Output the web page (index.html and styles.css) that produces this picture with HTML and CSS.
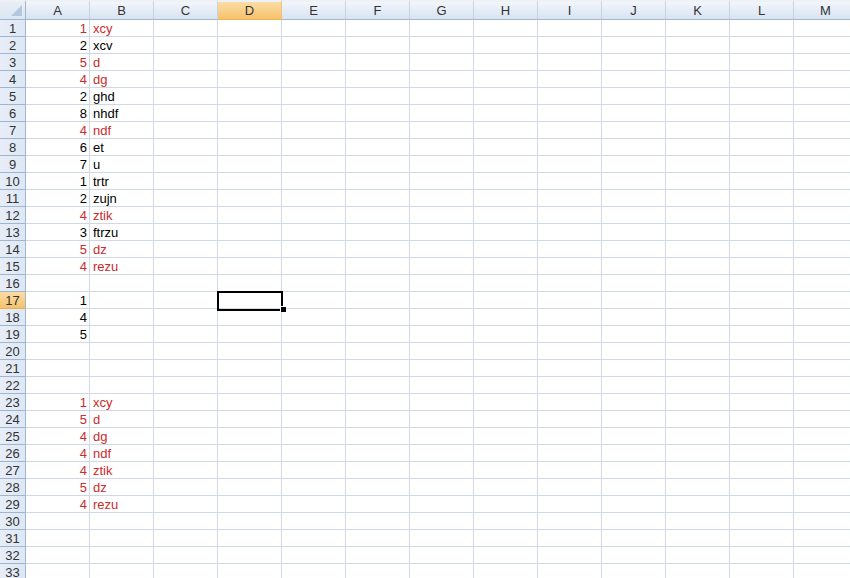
FILE: index.html
```html
<!DOCTYPE html>
<html lang="en">
<head>
    <meta charset="UTF-8">
    <title>Book1</title>
    <link rel="stylesheet" href="styles.css">
</head>
<body>
    <div class="sheet">
        <!-- column headers -->
        <div class="head-row">
            <div class="corner"></div>
            <div class="col-head">A</div>
            <div class="col-head">B</div>
            <div class="col-head">C</div>
            <div class="col-head active">D</div>
            <div class="col-head">E</div>
            <div class="col-head">F</div>
            <div class="col-head">G</div>
            <div class="col-head">H</div>
            <div class="col-head">I</div>
            <div class="col-head">J</div>
            <div class="col-head">K</div>
            <div class="col-head">L</div>
            <div class="col-head">M</div>
        </div>

        <div class="row"><div class="row-head">1</div><div class="cell num red">1</div><div class="cell red">xcy</div></div>
        <div class="row"><div class="row-head">2</div><div class="cell num">2</div><div class="cell">xcv</div></div>
        <div class="row"><div class="row-head">3</div><div class="cell num red">5</div><div class="cell red">d</div></div>
        <div class="row"><div class="row-head">4</div><div class="cell num red">4</div><div class="cell red">dg</div></div>
        <div class="row"><div class="row-head">5</div><div class="cell num">2</div><div class="cell">ghd</div></div>
        <div class="row"><div class="row-head">6</div><div class="cell num">8</div><div class="cell">nhdf</div></div>
        <div class="row"><div class="row-head">7</div><div class="cell num red">4</div><div class="cell red">ndf</div></div>
        <div class="row"><div class="row-head">8</div><div class="cell num">6</div><div class="cell">et</div></div>
        <div class="row"><div class="row-head">9</div><div class="cell num">7</div><div class="cell">u</div></div>
        <div class="row"><div class="row-head">10</div><div class="cell num">1</div><div class="cell">trtr</div></div>
        <div class="row"><div class="row-head">11</div><div class="cell num">2</div><div class="cell">zujn</div></div>
        <div class="row"><div class="row-head">12</div><div class="cell num red">4</div><div class="cell red">ztik</div></div>
        <div class="row"><div class="row-head">13</div><div class="cell num">3</div><div class="cell">ftrzu</div></div>
        <div class="row"><div class="row-head">14</div><div class="cell num red">5</div><div class="cell red">dz</div></div>
        <div class="row"><div class="row-head">15</div><div class="cell num red">4</div><div class="cell red">rezu</div></div>
        <div class="row"><div class="row-head">16</div></div>
        <div class="row"><div class="row-head active">17</div><div class="cell num">1</div><div class="cell"></div><div class="cell"></div><div class="cell selected"></div></div>
        <div class="row"><div class="row-head">18</div><div class="cell num">4</div></div>
        <div class="row"><div class="row-head">19</div><div class="cell num">5</div></div>
        <div class="row"><div class="row-head">20</div></div>
        <div class="row"><div class="row-head">21</div></div>
        <div class="row"><div class="row-head">22</div></div>
        <div class="row"><div class="row-head">23</div><div class="cell num red">1</div><div class="cell red">xcy</div></div>
        <div class="row"><div class="row-head">24</div><div class="cell num red">5</div><div class="cell red">d</div></div>
        <div class="row"><div class="row-head">25</div><div class="cell num red">4</div><div class="cell red">dg</div></div>
        <div class="row"><div class="row-head">26</div><div class="cell num red">4</div><div class="cell red">ndf</div></div>
        <div class="row"><div class="row-head">27</div><div class="cell num red">4</div><div class="cell red">ztik</div></div>
        <div class="row"><div class="row-head">28</div><div class="cell num red">5</div><div class="cell red">dz</div></div>
        <div class="row"><div class="row-head">29</div><div class="cell num red">4</div><div class="cell red">rezu</div></div>
        <div class="row"><div class="row-head">30</div></div>
        <div class="row"><div class="row-head">31</div></div>
        <div class="row"><div class="row-head">32</div></div>
        <div class="row"><div class="row-head">33</div></div>
    </div>
</body>
</html>
```
FILE: styles.css
```css
html, body {
    margin: 0;
    padding: 0;
    background-color: white;
    overflow: hidden;
}

.sheet {
    width: 860px;
    font-family: 'Liberation Sans', Arial, sans-serif;
    font-size: 13px;
    color: #000;
}

/* Column headers */
.head-row {
    display: flex;
    height: 20px;
}

.corner {
    position: relative;
    flex: none;
    width: 26px;
    box-sizing: border-box;
    border-right: 1px solid #9eb6ce;
    border-bottom: 1px solid #9eb6ce;
    border-top: 2px solid #eef2f7;
    background: linear-gradient(#e9eef5, #dce6f4);
}

.corner::after {
    content: '';
    position: absolute;
    right: 3px;
    bottom: 3px;
    width: 0;
    height: 0;
    border-left: 11px solid transparent;
    border-bottom: 11px solid #b5c7de;
}

.col-head {
    flex: none;
    width: 64px;
    box-sizing: border-box;
    border-right: 1px solid #c5d2e3;
    border-bottom: 1px solid #9eb6ce;
    border-top: 2px solid #eef2f7;
    background: linear-gradient(#f3f6fb 0%, #e4ecf7 50%, #d9e4f2 100%);
    text-align: center;
    line-height: 17px;
    color: #333;
}

.col-head.active {
    background: linear-gradient(#fbdca5 0%, #f9d08a 50%, #f4c26b 100%);
    border-bottom-color: #f0b352;
    border-right-color: #f0c27a;
}

/* Rows */
.row {
    display: flex;
    height: 17px;
    box-sizing: border-box;
    border-bottom: 1px solid #d0d7e5;
    background-image: linear-gradient(to right, #d0d7e5 1px, transparent 1px);
    background-size: 64px 100%;
    background-position: 25px 0;
}

.row-head {
    flex: none;
    width: 26px;
    box-sizing: border-box;
    height: 17px;
    margin-bottom: -1px;
    border-right: 1px solid #9eb6ce;
    border-bottom: 1px solid #9eb6ce;
    background: linear-gradient(to right, #e8eef8, #dde7f5);
    text-align: center;
    line-height: 17px;
    color: #333;
}

.row-head.active {
    background: linear-gradient(#fbdca5, #f4c26b);
    border-bottom-color: #e8b054;
}

.cell {
    flex: none;
    width: 64px;
    box-sizing: border-box;
    padding: 0 3px;
    line-height: 17px;
    white-space: nowrap;
    overflow: hidden;
}

.cell.num {
    text-align: right;
}

.red {
    color: #cc2b2b;
}

/* active cell */
.cell.selected {
    position: relative;
    overflow: visible;
}

.cell.selected::before {
    content: '';
    position: absolute;
    left: -1px;
    top: -1px;
    width: 66px;
    height: 20px;
    box-sizing: border-box;
    border: 2px solid #000;
}

.cell.selected::after {
    content: '';
    position: absolute;
    right: -4px;
    bottom: -4px;
    width: 5px;
    height: 5px;
    background-color: #000;
    border-left: 1px solid #fff;
    border-top: 1px solid #fff;
}
```
